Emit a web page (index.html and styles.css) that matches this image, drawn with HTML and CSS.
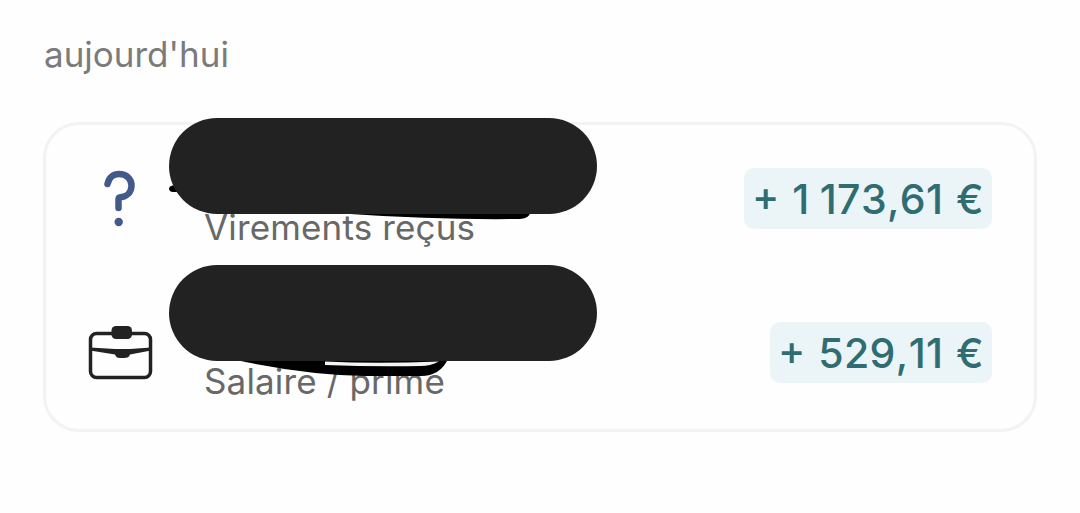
FILE: index.html
```html
<!DOCTYPE html>
<html lang="fr">
<head>
    <meta charset="UTF-8">
    <meta name="viewport" content="width=device-width, initial-scale=1.0">
    <title>Opérations</title>
    <link rel="stylesheet" href="styles.css">
</head>
<body>
    <h2 class="day">aujourd'hui</h2>
    <ul class="card">
        <li class="row">
            <div class="icon">
                <svg width="66" height="60" viewBox="1 0.5 66 60" fill="none">
                    <path d="M20.500 15.500C22 9 26.500 5.500 32 5.500C39.500 5.500 44.500 10.500 44.500 17C44.500 23.500 40 28.200 33.500 28.800Q31.500 29 31.500 31V39.500" stroke="#43598a" stroke-width="6.500" stroke-linecap="round"/>
                    <circle cx="31.700" cy="53.500" r="4.200" fill="#43598a"/>
                </svg>
            </div>
            <span class="category">Virements reçus</span>
            <span class="amount">+ 1<i class="thin"></i>173,61 €</span>
            <svg class="marker" width="600" height="150" viewBox="0 0 600 150">
                <path d="M140 60.500H126.500Q123 61 123 64Q123.500 67 127 67H140Z"/>
                <path d="M304 87L484 87Q484 93 474 94Q390 95 304 89Z"/>
            </svg>
            <div class="redacted redacted-first"></div>
        </li>
        <li class="row">
            <div class="icon">
                <svg width="66" height="60" viewBox="1 -1 66 60" fill="none">
                    <rect x="3.500" y="9.500" width="60" height="44" rx="6" stroke="#222" stroke-width="3.500"/>
                    <rect x="24.500" y="2" width="20.500" height="13" rx="4.500" fill="#222"/>
                    <path d="M3 23.500L28 25H43L64 23.500V26.500L43 30.500Q42 34 37 34H33Q29 34 28 30.500L3 26.500Z" fill="#222"/>
                </svg>
            </div>
            <span class="category">Salaire / prime</span>
            <span class="amount">+ 529,11 €</span>
            <svg class="marker" width="600" height="150" viewBox="0 0 600 150">
                <path d="M190 80H402Q394 97 375 97H320Q260 96 190 81Z"/>
                <path class="gap" d="M279 82.500Q330 85 393 82.500Q384 87 375 87Q330 88 279 86Z"/>
            </svg>
            <div class="redacted redacted-second"></div>
        </li>
    </ul>
</body>
</html>
```
FILE: styles.css
```css
body {
    margin: 0;
    padding: 32px 43px 0 43px;
    background-color: #fefefe;
    font-family: Inter, "Liberation Sans", sans-serif;
}
.day {
    margin: 0 0 46px 1px;
    font-size: 35px;
    line-height: 44px;
    font-weight: 400;
    color: #7b7b7b;
}
.card {
    box-sizing: border-box;
    width: 994px;
    margin: 0;
    padding: 0;
    list-style: none;
    border: 3px solid #f3f3f3;
    border-radius: 36px;
    display: flex;
    flex-direction: column;
    gap: 4px;
}
.row {
    position: relative;
    display: flex;
    align-items: flex-start;
    height: 150px;
    padding: 0 42px;
}
.icon {
    width: 66px;
    padding-top: 44px;
}
.icon svg {
    display: block;
}
.category {
    margin: 80px 0 0 50px;
    font-size: 35px;
    line-height: 44px;
    letter-spacing: 0.15px;
    color: #686868;
    white-space: nowrap;
}
.amount {
    box-sizing: border-box;
    height: 61px;
    margin: 43px 0 0 auto;
    padding: 1px 8px 0 8px;
    border-radius: 10px;
    background-color: #ebf4f6;
    font-size: 41px;
    line-height: 61px;
    font-weight: 500;
    font-kerning: none;
    font-feature-settings: "case";
    letter-spacing: 0.4px;
    word-spacing: 1.2px;
    color: #2f6d72;
    white-space: nowrap;
}
.thin {
    display: inline-block;
    width: 10px;
}
.marker {
    position: absolute;
    top: 0;
    left: 0;
    fill: #000;
}
.marker .gap {
    fill: #f4f4f4;
}
.redacted {
    position: absolute;
    left: 123px;
    width: 428px;
    height: 96px;
    border-radius: 48px;
    background-color: #222;
}
.redacted-first {
    top: -7px;
}
.redacted-second {
    top: -14px;
}
```
